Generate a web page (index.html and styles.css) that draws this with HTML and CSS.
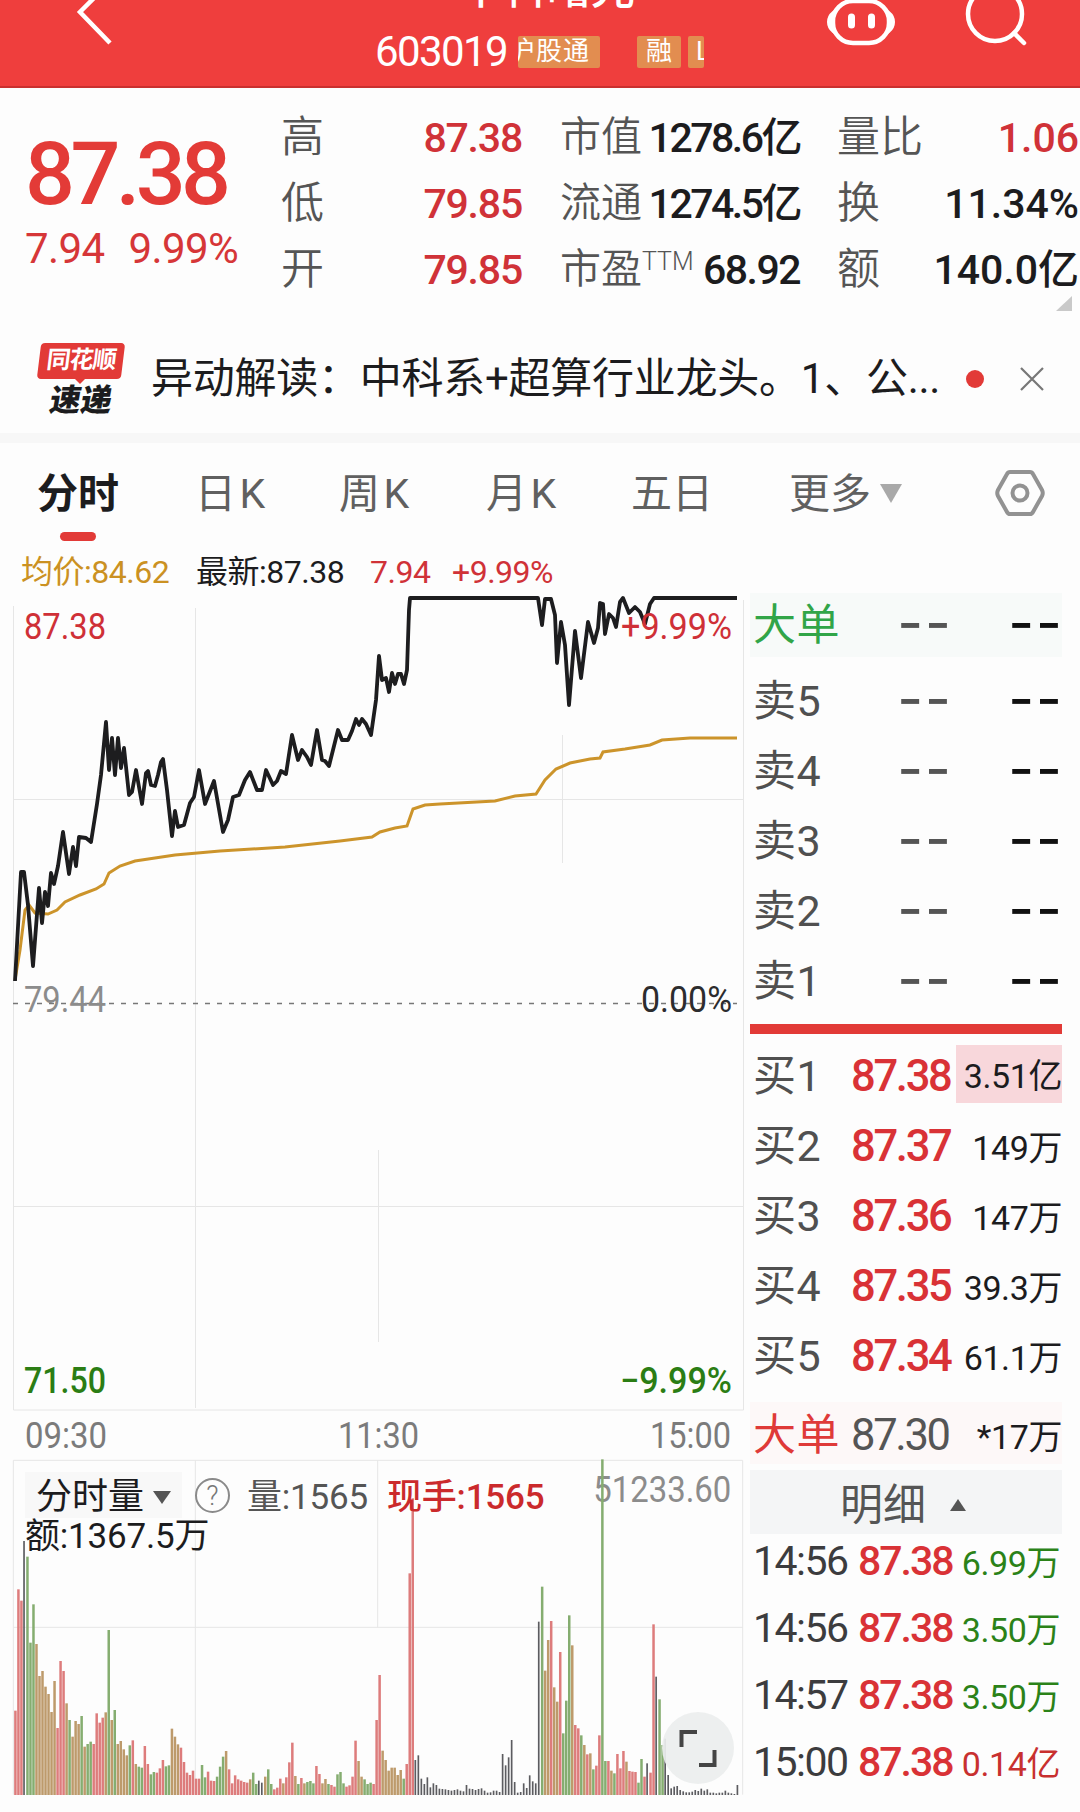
FILE: index.html
```html
<!DOCTYPE html>
<html lang="zh-CN">
<head>
    <meta charset="UTF-8">
    <title>中科曙光 603019</title>
    <link rel="stylesheet" href="styles.css">
</head>
<body>
    <div id="header">
        <svg class="back" width="40" height="50" viewBox="0 0 40 50"><path d="M35 -18L5 12L35 43"/></svg>
        <div class="title">
            <h1>中科曙光</h1>
            <div class="code">
                <span class="num">603019</span>
                <span class="tag cut"><i>沪股通</i></span>
                <span class="tag rong">融</span>
                <span class="tag last">L</span>
            </div>
        </div>
        <svg class="robot" width="74" height="50" viewBox="0 0 74 50">
            <rect x="9" y="1" width="56" height="42" rx="20"/>
            <path class="fill" d="M9 12Q4 16 4 22T9 32ZM65 12Q70 16 70 22T65 32Z"/>
            <path class="eye" d="M27.500 17V25M47.500 17V25"/>
        </svg>
        <svg class="search" width="66" height="50" viewBox="0 0 66 50">
            <circle cx="31" cy="14" r="27"/>
            <path d="M50 33L60 43"/>
        </svg>
    </div>

    <div id="quote">
        <div class="price">
            <b>87.38</b>
            <p><span>7.94</span><span>9.99%</span></p>
        </div>
        <dl class="c1">
            <div><dt>高</dt><dd class="red">87.38</dd></div>
            <div><dt>低</dt><dd class="red">79.85</dd></div>
            <div><dt>开</dt><dd class="red">79.85</dd></div>
        </dl>
        <dl class="c2">
            <div><dt>市值</dt><dd>1278.6亿</dd></div>
            <div><dt>流通</dt><dd>1274.5亿</dd></div>
            <div><dt>市盈<sup>TTM</sup></dt><dd>68.92</dd></div>
        </dl>
        <dl class="c3">
            <div><dt>量比</dt><dd class="red">1.06</dd></div>
            <div><dt>换</dt><dd>11.34%</dd></div>
            <div><dt>额</dt><dd>140.0亿</dd></div>
        </dl>
        <span class="corner"></span>
    </div>

    <div id="news">
        <div class="badge"><b>同花顺</b><em>速递</em></div>
        <p>异动解读：中科系+超算行业龙头。1、公...</p>
        <span class="dot"></span>
        <svg width="24" height="24" viewBox="0 0 24 24"><path d="M1 1L23 23M23 1L1 23"/></svg>
    </div>

    <div id="tabs">
        <span class="selected">分时</span>
        <span class="k1">日K</span>
        <span class="k2">周K</span>
        <span class="k3">月K</span>
        <span class="k4">五日</span>
        <span class="more">更多</span>
        <svg width="52" height="50" viewBox="0 0 52 50">
            <path d="M16 4H36Q38 4 39 6L48 22Q49.500 25 48 28L39 44Q38 46 36 46H16Q14 46 13 44L4 28Q2.500 25 4 22L13 6Q14 4 16 4Z"/>
            <circle cx="26" cy="25" r="7.500"/>
        </svg>
    </div>

    <div id="main">
        <div class="left">
            <div class="legend">
                <span class="avg">均价:84.62</span>
                <span class="now">最新:87.38</span>
                <span class="red">7.94</span>
                <span class="red">+9.99%</span>
            </div>
            <svg class="chart" width="744" height="864" viewBox="0 594 744 864">
                <path class="grid" d="M13.500 606V1410H743.500V600M195.500 608V1408M13 1206.500H743M13 799.500H743M378.500 1150V1342M562.500 735V863"/>
                <path class="zero" d="M13 1003.500H737"/>
                <polyline class="avgline" points="15,980 20,950 25,910 29,905 35,913 48,914 57,910 65,902 80,895 96,889 104,884 109,873 120,866 135,861 175,855 220,851 285,847 340,841 372,837 380,832 395,828 407,826 413,809 425,805 440,804 495,801 515,796 536,794 545,780 556,769 570,763 590,759 600,758 603,752 625,749 650,745 662,740 690,738 737,738"/>
                <polyline class="priceline" points="15,981 21,872 24,872 28,905 33,966 39,888 42,923 45,892 48,906 51,873 54,884 58,866 63,832 69,874 73,847 76,866 79,837 86,838 91,842 97,804 101,775 106,722 109,770 112,738 115,775 118,738 121,768 124,748 129,795 132,792 136,770 142,804 146,773 148,771 151,785 155,786 158,775 161,762 163,759 167,790 172,836 175,811 178,827 184,825 190,803 194,797 199,770 205,804 214,781 223,832 228,820 233,797 239,795 245,780 250,772 257,790 262,790 266,770 273,785 277,781 281,771 286,774 292,735 298,760 302,750 307,757 311,765 317,730 322,760 325,761 329,766 338,730 342,740 348,740 352,731 356,719 359,725 362,719 366,724 371,735 376,700 379,656 382,680 386,678 389,692 392,673 395,684 398,674 401,674 404,684 407,670 409,610 410,598 538,598 542,625 545,599 551,599 555,615 557,663 561,622 565,645 569,705 575,631 581,678 588,622 594,643 598,628 600,603 603,604 605,634 609,614 613,618 616,627 620,602 623,598 629,613 635,607 640,612 645,624 650,604 654,598 737,598"/>
                <text class="t-red" x="24" y="639" textLength="82" lengthAdjust="spacingAndGlyphs">87.38</text>
                <text class="t-red" x="621" y="639" textLength="111" lengthAdjust="spacingAndGlyphs">+9.99%</text>
                <text class="t-gray" x="24" y="1012" textLength="82" lengthAdjust="spacingAndGlyphs">79.44</text>
                <text class="t-black" x="641" y="1012" textLength="91" lengthAdjust="spacingAndGlyphs">0.00%</text>
                <text class="t-green" x="24" y="1393" textLength="82" lengthAdjust="spacingAndGlyphs">71.50</text>
                <text class="t-green" x="620" y="1393" textLength="112" lengthAdjust="spacingAndGlyphs">−9.99%</text>
                <text class="t-time" x="25" y="1448" textLength="82" lengthAdjust="spacingAndGlyphs">09:30</text>
                <text class="t-time" x="338" y="1448" textLength="81" lengthAdjust="spacingAndGlyphs">11:30</text>
                <text class="t-time" x="650" y="1448" textLength="81" lengthAdjust="spacingAndGlyphs">15:00</text>
            </svg>
            <div class="volume">
                <svg width="744" height="354" viewBox="0 294 2232 1062">
                    <path class="grid" d="M40 301H2228V1304M40 301V1304M586 301V1304M1133 301V802M40 802H2228"/>
                    <text class="t-gray" x="1780" y="427" textLength="414" lengthAdjust="spacingAndGlyphs">51233.60</text>
                    <g id="bars"></g>
                </svg>
                <div class="info">
                    <div class="line1">
                        <span class="name">分时量<i></i></span>
                        <span class="help">?</span>
                        <span class="vol">量:1565</span>
                        <span class="hand">现手:1565</span>
                    </div>
                    <div class="line2">额:1367.5万</div>
                </div>
                <div class="full">
                    <svg width="38" height="38" viewBox="0 0 38 38"><path d="M2.500 18V3H18M35.500 21V36H20"/></svg>
                </div>
            </div>
        </div>

        <div class="right">
            <ul class="sell">
                <li class="big"><span>大单</span><i>--</i><i>--</i></li>
                <li><span>卖5</span><i>--</i><i>--</i></li>
                <li><span>卖4</span><i>--</i><i>--</i></li>
                <li><span>卖3</span><i>--</i><i>--</i></li>
                <li><span>卖2</span><i>--</i><i>--</i></li>
                <li><span>卖1</span><i>--</i><i>--</i></li>
            </ul>
            <div class="bar"></div>
            <ul class="buy">
                <li class="hot"><span>买1</span><b>87.38</b><em>3.51亿</em></li>
                <li><span>买2</span><b>87.37</b><em>149万</em></li>
                <li><span>买3</span><b>87.36</b><em>147万</em></li>
                <li><span>买4</span><b>87.35</b><em>39.3万</em></li>
                <li><span>买5</span><b>87.34</b><em>61.1万</em></li>
                <li class="big"><span>大单</span><b>87.30</b><em>*17万</em></li>
            </ul>
            <div class="detail">明细<i></i></div>
            <ul class="deals">
                <li><span>14:56</span><b>87.38</b><em>6.99万</em></li>
                <li><span>14:56</span><b>87.38</b><em>3.50万</em></li>
                <li><span>14:57</span><b>87.38</b><em>3.50万</em></li>
                <li><span>15:00</span><b>87.38</b><em class="red">0.14亿</em></li>
            </ul>
        </div>
    </div>
    <script src="volume.js"></script>
</body>
</html>
```
FILE: styles.css
```css
*{
    margin: 0;
    padding: 0;
    box-sizing: border-box;
}
body{
    width: 1080px;
    height: 1812px;
    overflow: hidden;
    background: #fdfdfd;
    color: #1c1c1e;
    font-family: Roboto, "Noto Sans CJK SC", sans-serif;
}
li{
    list-style: none;
}
i, em{
    font-style: normal;
}
svg{
    display: block;
    fill: none;
}
.red{
    color: #d03238;
}

/* header */
#header{
    display: flex;
    height: 88px;
    background: #ef3e3d;
    border-bottom: 2px solid #c9302f;
    color: #fff;
    overflow: hidden;
}
#header svg{
    flex: none;
    stroke: #fff;
    stroke-width: 4.5;
    stroke-linecap: round;
}
#header .back{
    margin-left: 75px;
    stroke-linecap: butt;
}
#header .fill{
    fill: #fff;
    stroke-width: 2;
}
#header .eye{
    stroke-width: 7;
}
.title{
    width: 331px;
    margin-left: 260px;
}
.title h1{
    height: 32px;
    margin-top: -1px;
    padding-left: 84px;
    font-size: 44px;
    line-height: 50px;
    font-weight: 500;
    white-space: nowrap;
    position: relative;
    top: -35px;
}
.code{
    display: flex;
    height: 44px;
}
.code .num{
    width: 143px;
    font-size: 42px;
    line-height: 42px;
    letter-spacing: -1.6px;
}
.tag{
    height: 32px;
    margin-top: 5px;
    background: #e28d50;
    font-size: 26px;
    line-height: 30px;
    border-radius: 2px;
    overflow: hidden;
    white-space: nowrap;
}
.tag.cut{
    width: 82px;
}
.cut i{
    margin-left: -9px;
    letter-spacing: 1px;
}
.tag.rong{
    width: 44px;
    margin-left: 37px;
    text-align: center;
}
.tag.last{
    width: 16px;
    margin-left: 7px;
    padding-left: 8px;
}
#header .robot{
    margin-left: 118px;
}
#header .search{
    margin-left: 66px;
}

/* quote */
#quote{
    position: relative;
    display: flex;
    height: 245px;
    padding-top: 16px;
}
.price{
    width: 281px;
    padding-left: 25px;
    color: #e33b37;
}
.price b{
    display: block;
    height: 94px;
    margin-top: 23px;
    font-size: 88px;
    line-height: 94px;
    font-weight: 500;
    letter-spacing: -4.6px;
}
.price p{
    display: flex;
    gap: 24px;
    font-size: 42px;
    line-height: 50px;
    margin-top: 3px;
    color: #d63638;
    letter-spacing: -0.6px;
}
#quote dl div{
    display: flex;
    justify-content: space-between;
    height: 66px;
    line-height: 66px;
}
#quote dt{
    font-size: 43px;
    color: #555;
    white-space: nowrap;
    font-weight: 350;
}
#quote dd{
    font-size: 41px;
    font-weight: 500;
    letter-spacing: -1.2px;
    white-space: nowrap;
    padding-top: 1px;
}
.c1{
    width: 241px;
}
.c2{
    width: 240px;
    margin-left: 38px;
}
#quote .c2 dt{
    font-size: 41px;
}
#quote .c2 dd{
    letter-spacing: -2.5px;
}
#quote .c2 div:last-child dd{
    letter-spacing: -1.5px;
}
.c2 sup{
    font-size: 25px;
    line-height: 0;
    vertical-align: 13px;
    font-weight: 300;
}
.c3{
    width: 242px;
    margin-left: 37px;
}
#quote .c3 dd{
    letter-spacing: 0;
}
.corner{
    position: absolute;
    right: 8px;
    top: 208px;
    border-left: 16px solid transparent;
    border-bottom: 15px solid #c9c9c9;
}

/* news */
#news{
    display: flex;
    align-items: center;
    height: 110px;
    padding: 0 0 8px 37px;
    border-bottom: 10px solid #f7f7f7;
}
.badge{
    width: 88px;
    height: 76px;
    margin-top: 3px;
    text-align: center;
    position: relative;
}
.badge b{
    display: block;
    height: 36px;
    margin: 0 2px;
    background: #e23a37;
    border-radius: 4px;
    color: #fff;
    font-size: 24px;
    line-height: 35px;
    letter-spacing: -1px;
    transform: skewX(-7deg);
}
.badge:after{
    content: "";
    position: absolute;
    left: 37px;
    top: 35px;
    border: 6px solid transparent;
    border-top-color: #e23a37;
}
.badge em{
    display: block;
    font-size: 31px;
    line-height: 44px;
    font-weight: 900;
    transform: skewX(-10deg);
}
#news p{
    width: 788px;
    margin-left: 26px;
    font-size: 42px;
    line-height: 60px;
    letter-spacing: -0.25px;
    white-space: nowrap;
}
.dot{
    width: 18px;
    height: 18px;
    margin-left: 27px;
    border-radius: 50%;
    background: #e23a37;
}
#news svg{
    margin-left: 36px;
    stroke: #777;
    stroke-width: 2.2;
}

/* tabs */
#tabs{
    display: flex;
    height: 105px;
    padding-left: 37px;
    font-size: 41px;
    line-height: 103px;
    color: #606060;
}
#tabs span{
    white-space: nowrap;
}
#tabs .selected{
    position: relative;
    width: 158px;
    font-weight: 700;
    color: #1c1c1e;
}
#tabs .selected:after{
    content: "";
    position: absolute;
    left: 23px;
    top: 89px;
    width: 36px;
    height: 9px;
    border-radius: 5px;
    background: #e23a37;
}
.k1{
    width: 144px;
}
.k2{
    width: 147px;
}
.k3{
    width: 145px;
}
.k4{
    width: 158px;
}
.k1, .k2, .k3{
    letter-spacing: 3.5px;
}
#tabs .more{
    width: 205px;
}
.more:after{
    content: "";
    display: inline-block;
    margin-left: 9px;
    vertical-align: 5px;
    border: 11px solid transparent;
    border-top: 19px solid #a9a9a9;
    border-bottom: 0;
}
#tabs svg{
    margin-top: 25px;
    stroke: #929292;
    stroke-width: 4;
}

/* chart */
#main{
    display: flex;
}
.left{
    width: 750px;
}
.legend{
    display: flex;
    height: 46px;
    padding-left: 21px;
    font-size: 32px;
    line-height: 48px;
    letter-spacing: -0.5px;
    white-space: nowrap;
}
.legend .avg{
    width: 175px;
    color: #cb9122;
}
.legend .now{
    width: 174px;
}
.legend .red{
    width: 82px;
}
.grid{
    stroke: #e6e6e6;
    stroke-width: 1;
}
.volume .grid{
    stroke-width: 3;
}
.zero{
    stroke: #777;
    stroke-width: 1.5;
    stroke-dasharray: 5 7;
}
.avgline{
    stroke: #cc942b;
    stroke-width: 3;
}
.priceline{
    stroke: #1d1d1f;
    stroke-width: 3.8;
    stroke-linejoin: round;
}
.chart text{
    font-size: 36px;
}
.volume text{
    font-size: 108px;
}
.t-red{
    fill: #cf3037;
}
.t-gray{
    fill: #8c8c8c;
}
.t-black{
    fill: #2c2c2e;
}
.t-green{
    fill: #2b7d14;
    font-weight: 500;
}
.t-time{
    fill: #7b7b7b;
}

/* volume */
.volume{
    position: relative;
    height: 354px;
}
.r{
    fill: #dd7c7c;
}
.g{
    fill: #85ad70;
}
.o{
    fill: #bd9a6b;
}
.k{
    fill: #5c5c60;
}
.info{
    position: absolute;
    left: 25px;
    top: 14px;
    white-space: nowrap;
}
.line1{
    display: flex;
    align-items: center;
    height: 46px;
    font-size: 35px;
}
.line1 .name{
    width: 157px;
    padding-left: 11px;
    line-height: 50px;
    height: 46px;
    font-size: 36px;
    background: #f8f8f8;
}
.name i{
    display: inline-block;
    margin-left: 9px;
    vertical-align: 5px;
    border: 9px solid transparent;
    border-top: 13px solid #555;
    border-bottom: 0;
}
.help{
    width: 35px;
    height: 35px;
    margin-left: 13px;
    border: 2px solid #8a8a8a;
    border-radius: 50%;
    font-size: 27px;
    line-height: 32px;
    font-weight: 300;
    text-align: center;
    color: #777;
}
.line1 .vol, .line1 .hand{
    padding-bottom: 4px;
    letter-spacing: -0.2px;
}
.line1 .vol{
    width: 140px;
    margin-left: 17px;
    color: #555;
}
.line1 .hand{
    color: #cb2a2c;
    font-weight: 500;
}
.line2{
    height: 36px;
    font-size: 35px;
    line-height: 37px;
    letter-spacing: -0.2px;
}
.full{
    position: absolute;
    left: 662px;
    top: 254px;
    width: 72px;
    height: 72px;
    padding: 17px;
    border-radius: 50%;
    background: rgba(236, 238, 238, 0.92);
}
.full svg{
    stroke: #444;
    stroke-width: 4;
}

/* order book */
.right{
    width: 312px;
    padding-top: 45px;
}
.right li{
    display: flex;
    align-items: center;
    height: 70px;
    padding-left: 3px;
    white-space: nowrap;
}
.right li span{
    width: 98px;
    font-size: 43px;
    letter-spacing: 0.5px;
    color: #505050;
}
.sell li span{
    padding-bottom: 9px;
}
.sell li i{
    width: 52px;
    margin-left: 47px;
    padding-bottom: 20px;
    font-family: "Noto Sans CJK SC", sans-serif;
    font-size: 70px;
    line-height: 44px;
    letter-spacing: 3.4px;
    color: #555;
}
.sell li i + i{
    margin-left: 59px;
    color: #111;
}
.sell .big{
    height: 64px;
    margin-bottom: 9px;
    background: #f7faf9;
}
.sell .big span{
    color: #31a548;
}
.bar{
    height: 10px;
    margin-top: 8px;
    background: #e23a37;
}
.buy{
    padding-top: 5px;
}
.buy li span{
    padding-bottom: 5px;
}
.buy li b{
    width: 105px;
    padding-top: 4px;
    font-size: 43.5px;
    font-weight: 500;
    letter-spacing: -2.3px;
    color: #d93236;
}
.buy li em, .deals li em{
    flex: 1;
    text-align: right;
    font-size: 34px;
    letter-spacing: -0.4px;
}
.buy li em{
    padding-top: 3px;
}
.buy .hot em{
    height: 58px;
    line-height: 57px;
    background: #f8d7db;
}
.buy .big{
    height: 62px;
    margin-top: 13px;
    background: #fdf8f8;
}
.buy .big span{
    color: #df3a38;
}
.buy .big b{
    color: #555;
    font-weight: 400;
}
.detail{
    height: 64px;
    margin-top: 6px;
    padding-left: 90px;
    background: #f4f5f6;
    font-size: 43px;
    line-height: 71px;
    color: #555;
}
.detail i{
    display: inline-block;
    margin-left: 24px;
    vertical-align: 9px;
    border: 8px solid transparent;
    border-bottom: 12px solid #555;
    border-top: 0;
}
.deals{
    margin-top: -7px;
}
.deals li{
    height: 67px;
}
.right .deals li span{
    width: 105px;
    font-size: 41px;
    color: #3c3c3e;
    letter-spacing: -1.5px;
}
.deals li b{
    width: 97px;
    font-size: 41px;
    font-weight: 500;
    letter-spacing: -2px;
    color: #d93236;
}
.deals li em{
    padding-right: 2px;
    color: #2b8218;
}
.deals li em.red{
    color: #c8302f;
}
```
FILE: volume.js
```js
// top edge of every minute bar + its colour, the base line is at 1304
var sData='1052r 688r 722r 543k 590g 848g 733g 852o 948o 933o 980o 1002o 1056o 963o 1104r 903r 933r 1030o 1080g 1130o '+
    '1083o 1092o 1068g 1160o 1152g 1145g 1152r 1060r 1088r 1073r 1057o 810g 1080o 1050g 1152o 1143o 1168o 1186o 1156g 1141r '+
    '1212o 1220g 1223g 1158r 1212r 1243g 1236g 1238r 1225r 1200r 1219g 1216g 1106o 1130o 1153o 1163r 1206r 1238r 1245r 1232r '+
    '1256r 1256r 1215g 1252g 1235r 1262r 1263r 1250g 1220g 1190g 1173o 1228r 1270r 1246r 1258r 1262r 1266r 1268r 1258o 1238g '+
    '1272g 1262k 1268k 1250o 1228g 1272g 1288r 1283r 1256r 1270o 1252r 1207r 1148r 1248o 1272g 1254r 1270o 1266g 1263g 1270g '+
    '1218r 1242r 1270o 1257o 1272g 1275r 1280r 1243g 1236g 1270g 1280r 1276r 1250r 1142r 1203o 1250o 1258g 1272g 1268g 1272r '+
    '1080r 945r 1172o 1200o 1232o 1223o 1223o 1245o 1230o 1256g 1212r 640r 415r 1200k 1186k 1256k 1272k 1252k 1282k 1270k '+
    '1275k 1286k 1287k 1288k 1290k 1292k 1290k 1288k 1292k 1294k 1275k 1286k 1287k 1290k 1287k 1285k 1292k 1298k 1297k 1292k '+
    '1292k 1296k 1182k 1216k 1192k 1140k 1266k 1298k 1296k 1270k 1284k 1246k 1264k 1270k 785k 680g 932o 840o 783r 982o '+
    '1025o 876r 1120g 1022g 766g 856o 1095r 1105r 1126g 1155o 1183r 1180o 1228g 1217r 1126r 298g 1203g 1203r 1232o 1240g '+
    '1182r 1225r 1173r 1205o 1233r 1235r 1236r 1268g 1197g 1250r 1210k 1238r 793r 950k 1018g 1155g 1136k 1245k 1285k 1280k '+
    '1278k 1290k 1294k 1297k 1297k 1295k 1290k 1293k 1286k 1292k 1288k 1298k 1298k 1300k 1298k 1298k 1292k 1298k 1300k 1302k 1275k';
var aData=sData.split(' ');
var oBars=document.getElementById('bars');
for(var i=0;i<aData.length;i++){
    var iTop=parseInt(aData[i]);
    var type=aData[i].slice(-1);
    var oRect=document.createElementNS('http://www.w3.org/2000/svg','rect');
    oRect.setAttribute('x',42.5+i*9.03);
    oRect.setAttribute('y',iTop);
    oRect.setAttribute('width',type=='k'?5:7.5);
    oRect.setAttribute('height',1305-iTop);
    oRect.setAttribute('class',type);
    oBars.appendChild(oRect);
}
```
